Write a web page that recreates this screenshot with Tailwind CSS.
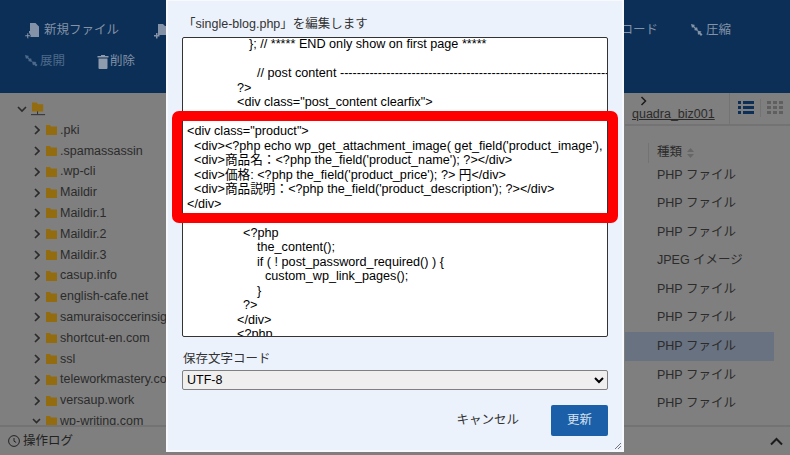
<!DOCTYPE html>
<html lang="ja">
<head>
<meta charset="UTF-8">
<title>single-blog.php</title>
<script src="https://cdn.jsdelivr.net/npm/@tailwindcss/browser@4"></script>
</head>
<body class="bg-[#7f7f7f] font-['Liberation_Sans','Noto_Sans_CJK_JP',sans-serif] text-[12.5px]">
<div class="relative w-[790px] h-[455px] overflow-hidden flex flex-col">

  <!-- toolbar -->
  <header class="h-[93px] bg-[#0c2f57] text-[#8392a6] pl-[25px] pr-[59px] flex flex-col">
    <div class="h-[19px] mt-[21px] flex items-center">
      <span class="flex items-center gap-[4px]">
        <svg class="w-[15px] h-[17px]" viewBox="0 0 15 17" fill="#8392a6"><path d="M5 1h5.500l3.500 3.500V15H5v-3.500h-1V9h1z"/><path d="M0 13h2v-2h1.500v2h2v1.500h-2v2H2v-2H0z" stroke="#0c2f57" stroke-width=".5"/></svg>
        新規ファイル
      </span>
      <span class="ml-[35px] flex items-center gap-[4px]">
        <svg class="w-[16px] h-[17px]" viewBox="0 0 16 17" fill="#8392a6"><path d="M4 2h5l2 2h5v9H4z"/><path d="M0 13h2v-2h1.500v2h2v1.500h-2v2H2v-2H0z"/></svg>
        新規フォルダ
      </span>
      <span class="ml-auto">ダウンロード</span>
      <span class="ml-[33px] flex items-center gap-[3px]">
        <svg class="w-[12px] h-[13px]" viewBox="0 0 12 13" fill="#8392a6"><path d="M0 0l4 1-1 1 2 2 1-1 1 4-4-1 1-1-2-2-1 1z"/><path d="M6.500 6.500l4 1-1 1 2 2-1.500 1.500-2-2-1 1z"/></svg>
        圧縮
      </span>
    </div>
    <div class="h-[19px] mt-[12px] flex items-center">
      <span class="flex items-center gap-[2px] text-[#4d6a8a]">
        <svg class="w-[13px] h-[13px]" viewBox="0 0 13 13" fill="#4d6a8a"><path d="M0 0l4 1-1 1 2 2 1-1 1 4-4-1 1-1-2-2-1 1z"/><path d="M7 6.500l1 4 1-1 2 2 1.500-1.500-2-2 1-1z"/></svg>
        展開
      </span>
      <span class="ml-[32px] flex items-center gap-[1px]">
        <svg class="w-[12px] h-[14px]" viewBox="0 0 12 14" fill="#8f9cae"><path d="M4 0h4v1h3.500v1.500H.5V1H4z"/><path d="M1.500 3.500h9V13a1 1 0 0 1-1 1h-7a1 1 0 0 1-1-1z"/></svg>
        削除
      </span>
    </div>
  </header>

  <!-- main -->
  <div class="flex-1 flex min-h-0 text-[#2b2b2b]">
    <div class="flex-1 pt-[6px] pl-[17px] overflow-hidden">
      <div class="h-[20.800px] flex items-center">
        <svg class="w-[10px] h-[7px] mr-[6px]" viewBox="0 0 10 7" fill="none" stroke="#2b2b2b" stroke-width="1.600"><path d="M1 1l4 4 4-4"/></svg>
        <svg class="w-[15px] h-[15px] -ml-[2px]" viewBox="0 0 16 15"><path d="M1 0h5l1.500 2H13v7.500H1z" fill="#946c10"/><path d="M7 9.500v3M0 13h15" stroke="#2b2b2b" stroke-width="1"/></svg>
      </div>
      <div class="pl-[17px] whitespace-nowrap">
        <div class="h-[20.800px] flex items-center"><svg class="w-[6px] h-[10px] mr-[6px]" viewBox="0 0 6 10" fill="none" stroke="#2b2b2b" stroke-width="1.700"><path d="M1 1l4 4-4 4"/></svg><svg class="w-[11px] h-[10px] mr-[3px]" viewBox="0 0 11 10" fill="#946c10"><path d="M0 0h4l1 1.500h6V10H0z"/></svg>.pki</div>
        <div class="h-[20.800px] flex items-center"><svg class="w-[6px] h-[10px] mr-[6px]" viewBox="0 0 6 10" fill="none" stroke="#2b2b2b" stroke-width="1.700"><path d="M1 1l4 4-4 4"/></svg><svg class="w-[11px] h-[10px] mr-[3px]" viewBox="0 0 11 10" fill="#946c10"><path d="M0 0h4l1 1.500h6V10H0z"/></svg>.spamassassin</div>
        <div class="h-[20.800px] flex items-center"><svg class="w-[6px] h-[10px] mr-[6px]" viewBox="0 0 6 10" fill="none" stroke="#2b2b2b" stroke-width="1.700"><path d="M1 1l4 4-4 4"/></svg><svg class="w-[11px] h-[10px] mr-[3px]" viewBox="0 0 11 10" fill="#946c10"><path d="M0 0h4l1 1.500h6V10H0z"/></svg>.wp-cli</div>
        <div class="h-[20.800px] flex items-center"><svg class="w-[6px] h-[10px] mr-[6px]" viewBox="0 0 6 10" fill="none" stroke="#2b2b2b" stroke-width="1.700"><path d="M1 1l4 4-4 4"/></svg><svg class="w-[11px] h-[10px] mr-[3px]" viewBox="0 0 11 10" fill="#946c10"><path d="M0 0h4l1 1.500h6V10H0z"/></svg>Maildir</div>
        <div class="h-[20.800px] flex items-center"><svg class="w-[6px] h-[10px] mr-[6px]" viewBox="0 0 6 10" fill="none" stroke="#2b2b2b" stroke-width="1.700"><path d="M1 1l4 4-4 4"/></svg><svg class="w-[11px] h-[10px] mr-[3px]" viewBox="0 0 11 10" fill="#946c10"><path d="M0 0h4l1 1.500h6V10H0z"/></svg>Maildir.1</div>
        <div class="h-[20.800px] flex items-center"><svg class="w-[6px] h-[10px] mr-[6px]" viewBox="0 0 6 10" fill="none" stroke="#2b2b2b" stroke-width="1.700"><path d="M1 1l4 4-4 4"/></svg><svg class="w-[11px] h-[10px] mr-[3px]" viewBox="0 0 11 10" fill="#946c10"><path d="M0 0h4l1 1.500h6V10H0z"/></svg>Maildir.2</div>
        <div class="h-[20.800px] flex items-center"><svg class="w-[6px] h-[10px] mr-[6px]" viewBox="0 0 6 10" fill="none" stroke="#2b2b2b" stroke-width="1.700"><path d="M1 1l4 4-4 4"/></svg><svg class="w-[11px] h-[10px] mr-[3px]" viewBox="0 0 11 10" fill="#946c10"><path d="M0 0h4l1 1.500h6V10H0z"/></svg>Maildir.3</div>
        <div class="h-[20.800px] flex items-center"><svg class="w-[6px] h-[10px] mr-[6px]" viewBox="0 0 6 10" fill="none" stroke="#2b2b2b" stroke-width="1.700"><path d="M1 1l4 4-4 4"/></svg><svg class="w-[11px] h-[10px] mr-[3px]" viewBox="0 0 11 10" fill="#946c10"><path d="M0 0h4l1 1.500h6V10H0z"/></svg>casup.info</div>
        <div class="h-[20.800px] flex items-center"><svg class="w-[6px] h-[10px] mr-[6px]" viewBox="0 0 6 10" fill="none" stroke="#2b2b2b" stroke-width="1.700"><path d="M1 1l4 4-4 4"/></svg><svg class="w-[11px] h-[10px] mr-[3px]" viewBox="0 0 11 10" fill="#946c10"><path d="M0 0h4l1 1.500h6V10H0z"/></svg>english-cafe.net</div>
        <div class="h-[20.800px] flex items-center"><svg class="w-[6px] h-[10px] mr-[6px]" viewBox="0 0 6 10" fill="none" stroke="#2b2b2b" stroke-width="1.700"><path d="M1 1l4 4-4 4"/></svg><svg class="w-[11px] h-[10px] mr-[3px]" viewBox="0 0 11 10" fill="#946c10"><path d="M0 0h4l1 1.500h6V10H0z"/></svg>samuraisoccerinsight.com</div>
        <div class="h-[20.800px] flex items-center"><svg class="w-[6px] h-[10px] mr-[6px]" viewBox="0 0 6 10" fill="none" stroke="#2b2b2b" stroke-width="1.700"><path d="M1 1l4 4-4 4"/></svg><svg class="w-[11px] h-[10px] mr-[3px]" viewBox="0 0 11 10" fill="#946c10"><path d="M0 0h4l1 1.500h6V10H0z"/></svg>shortcut-en.com</div>
        <div class="h-[20.800px] flex items-center"><svg class="w-[6px] h-[10px] mr-[6px]" viewBox="0 0 6 10" fill="none" stroke="#2b2b2b" stroke-width="1.700"><path d="M1 1l4 4-4 4"/></svg><svg class="w-[11px] h-[10px] mr-[3px]" viewBox="0 0 11 10" fill="#946c10"><path d="M0 0h4l1 1.500h6V10H0z"/></svg>ssl</div>
        <div class="h-[20.800px] flex items-center"><svg class="w-[6px] h-[10px] mr-[6px]" viewBox="0 0 6 10" fill="none" stroke="#2b2b2b" stroke-width="1.700"><path d="M1 1l4 4-4 4"/></svg><svg class="w-[11px] h-[10px] mr-[3px]" viewBox="0 0 11 10" fill="#946c10"><path d="M0 0h4l1 1.500h6V10H0z"/></svg>teleworkmastery.com</div>
        <div class="h-[20.800px] flex items-center"><svg class="w-[6px] h-[10px] mr-[6px]" viewBox="0 0 6 10" fill="none" stroke="#2b2b2b" stroke-width="1.700"><path d="M1 1l4 4-4 4"/></svg><svg class="w-[11px] h-[10px] mr-[3px]" viewBox="0 0 11 10" fill="#946c10"><path d="M0 0h4l1 1.500h6V10H0z"/></svg>versaup.work</div>
        <div class="h-[20.800px] flex items-center"><svg class="w-[9px] h-[6px] mr-[5px] -ml-[2px]" viewBox="0 0 9 6" fill="none" stroke="#2b2b2b" stroke-width="1.600"><path d="M1 1l3.500 3.500L8 1"/></svg><svg class="w-[11px] h-[10px] mr-[3px]" viewBox="0 0 11 10" fill="#946c10"><path d="M0 0h4l1 1.500h6V10H0z"/></svg>wp-writing.com</div>
      </div>
    </div>

    <div class="w-[165px] flex flex-col">
      <div class="h-[33px] flex border-b-2 border-[#737373]">
        <div class="w-[105px] pl-[7px] border-r border-[#737373] leading-none">
          <svg class="w-[8px] h-[10px] ml-[8px] mt-[3px]" viewBox="0 0 8 10" fill="none" stroke="#1c1c1c" stroke-width="1.500"><path d="M1.500 1l4 4-4 4"/></svg>
          <a class="underline block mt-[2px]">quadra_biz001</a>
        </div>
        <div class="flex-1 flex items-center pl-[8px] pb-[2px]">
          <svg class="w-[16px] h-[15px]" viewBox="0 0 16 15" fill="#0c2f57"><path d="M0 1h3v3H0zM5 1h11v3H5zM0 6h3v3H0zM5 6h11v3H5zM0 11h3v3H0zM5 11h11v3H5z"/></svg>
          <div class="w-px h-[18px] bg-[#737373] mx-[6px]"></div>
          <svg class="w-[16px] h-[15px]" viewBox="0 0 16 15" fill="#5f5f5f"><path d="M0 1h4v3H0zM6 1h4v3H6zM12 1h4v3h-4zM0 6h4v3H0zM6 6h4v3H6zM12 6h4v3h-4zM0 11h4v3H0zM6 11h4v3H6zM12 11h4v3h-4z"/></svg>
        </div>
      </div>
      <div class="h-[37px] pl-[23px] pt-[16px] flex items-center">
        <div class="h-[20px] border-l border-[#737373] pl-[8px] flex items-center gap-[5px]">種類
          <svg class="w-[7px] h-[10px]" viewBox="0 0 7 10" fill="#666"><path d="M3.500 0L7 4H0zM3.500 10L0 6h7z"/></svg>
        </div>
      </div>
      <div class="mr-[16px] -mt-[2.5px] leading-[28.600px]">
        <div class="pl-[32px]">PHP ファイル</div>
        <div class="pl-[32px]">PHP ファイル</div>
        <div class="pl-[32px]">PHP ファイル</div>
        <div class="pl-[32px]">JPEG イメージ</div>
        <div class="pl-[32px]">PHP ファイル</div>
        <div class="pl-[32px]">PHP ファイル</div>
        <div class="pl-[32px] bg-[#697280]">PHP ファイル</div>
        <div class="pl-[32px]">PHP ファイル</div>
        <div class="pl-[32px]">PHP ファイル</div>
      </div>
    </div>
  </div>

  <!-- log bar -->
  <footer class="h-[30px] bg-[#7f7f7f] border-t-2 border-[#737373] flex items-center pl-[8px] pr-[7px] text-[#222] z-0">
    <svg class="w-[12px] h-[12px] mr-[3px]" viewBox="0 0 12 12" fill="none" stroke="#222" stroke-width="1"><circle cx="6" cy="6" r="5.400"/><path d="M6 3v3.200l2.200 1.300"/></svg>
    操作ログ
    <svg class="w-[13px] h-[9px] ml-auto" viewBox="0 0 13 9" fill="none" stroke="#1c1c1c" stroke-width="2"><path d="M1 7.500l5.500-5.500 5.500 5.500"/></svg>
  </footer>

  <!-- edit dialog -->
  <div class="absolute left-[166px] -top-[1px] w-[458px] h-[453px] bg-[#ebf2fb] border-2 border-[#f7f9fd] px-[14px] flex flex-col text-[#333]">
    <div class="h-[19px] mt-[14px] pl-[1px] flex items-center">「single-blog.php」を編集します</div>
    <div class="mt-[3px] h-[300px] bg-white border border-[#333] rounded-[2px] overflow-hidden pl-[4px] text-black text-[12.65px] leading-[14.500px] whitespace-nowrap">
      <div class="pl-[62px] -mt-[1px]">}; // ***** END only show on first page *****</div>
      <div class="h-[14.500px]"></div>
      <div class="pl-[70px]">// post content --------------------------------------------------------------------------------------</div>
      <div class="pl-[50px]">?&gt;</div>
      <div class="pl-[50px]">&lt;div class="post_content clearfix"&gt;</div>
      <div class="h-[14.500px]"></div>
      <div>&lt;div class="product"&gt;</div>
      <div class="pl-[7px]">&lt;div&gt;&lt;?php echo wp_get_attachment_image( get_field('product_image'),</div>
      <div class="pl-[7px]">&lt;div&gt;商品名：&lt;?php the_field('product_name'); ?&gt;&lt;/div&gt;</div>
      <div class="pl-[7px]">&lt;div&gt;価格: &lt;?php the_field('product_price'); ?&gt; 円&lt;/div&gt;</div>
      <div class="pl-[7px]">&lt;div&gt;商品説明：&lt;?php the_field('product_description'); ?&gt;&lt;/div&gt;</div>
      <div>&lt;/div&gt;</div>
      <div class="h-[14.500px]"></div>
      <div class="pl-[56px]">&lt;?php</div>
      <div class="pl-[70px]">the_content();</div>
      <div class="pl-[70px]">if ( ! post_password_required() ) {</div>
      <div class="pl-[78px]">custom_wp_link_pages();</div>
      <div class="pl-[70px]">}</div>
      <div class="pl-[56px]">?&gt;</div>
      <div class="pl-[50px]">&lt;/div&gt;</div>
      <div class="pl-[50px]">&lt;?php</div>
    </div>
    <label class="mt-[13px] h-[18px] pl-[1px] flex items-center">保存文字コード</label>
    <select class="mt-[2px] h-[20px] bg-[#efefef] border border-[#808080] rounded-[2px] text-black">
      <option>UTF-8</option>
    </select>
    <div class="mt-[15px] flex items-center justify-end">
      <button class="mr-[32px]">キャンセル</button>
      <button class="w-[57px] h-[31px] bg-[#1a5fa8] rounded-[2px] text-[#d5e0ee]">更新</button>
    </div>
    <svg class="absolute right-[1px] bottom-[1px] w-[6px] h-[6px]" viewBox="0 0 6 6" stroke="#777" stroke-width="1"><path d="M0 6l6-6M3 6l3-3"/></svg>
  </div>

  <!-- highlight -->
  <div class="absolute left-[172px] top-[111px] w-[446px] h-[112px] border-[10px] border-[#ff0000] rounded-[7px]"></div>
</div>
</body>
</html>
